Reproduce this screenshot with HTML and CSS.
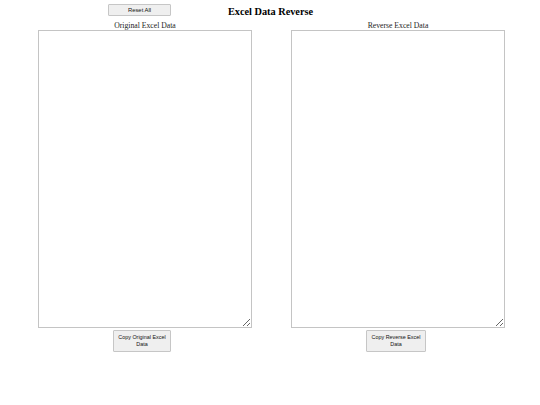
FILE: index.html
```html
<!DOCTYPE html>
<html>
<head>
<meta charset="utf-8">
<link rel="stylesheet" href="styles.css">
</head>
<body>
<div class="header">
  <button class="btn reset">Reset All</button>
  <h1 class="title">Excel Data Reverse</h1>
</div>
<div class="panels">
  <div class="panel">
    <div class="label">Original Excel Data</div>
    <textarea class="area"></textarea>
    <button class="btn copy">Copy Original Excel Data</button>
  </div>
  <div class="panel">
    <div class="label">Reverse Excel Data</div>
    <textarea class="area"></textarea>
    <button class="btn copy copy-r">Copy Reverse Excel Data</button>
  </div>
</div>
</body>
</html>
```
FILE: styles.css
```css
html, body { margin: 0; padding: 0; background: #fff; }
body { width: 540px; height: 405px; font-family: "Liberation Serif", serif; color: #000; }
.header { position: relative; height: 21px; }
.title { margin: 0; padding-top: 5px; text-align: center; font-size: 10.3px; font-weight: bold; line-height: 13px; padding-left: 1px; }
.btn {
  font-family: "Liberation Sans", Arial, sans-serif;
  font-size: 5.4px;
  color: #111;
  background: #efefef;
  border: 1px solid #c6c6c6;
  border-radius: 1px;
  padding: 0;
}
.reset { position: absolute; left: 108px; top: 4px; width: 63px; height: 12px; font-size: 5.9px; }
.panels { display: flex; padding-left: 38px; gap: 39px; }
.panel { display: flex; flex-direction: column; align-items: center; width: 214px; }
.label { font-size: 7.7px; line-height: 9px; height: 9px; color: #222; }
.area {
  box-sizing: border-box;
  width: 214px; height: 298px;
  border: 1px solid #c4c4c4;
  margin: 0; padding: 0;
  resize: both;
}
.copy { margin-top: 2px; margin-right: 6px; width: 58px; height: 22px; line-height: 7px; padding: 0 2px; }
.copy-r { width: 60px; margin-right: 4px; }
```
